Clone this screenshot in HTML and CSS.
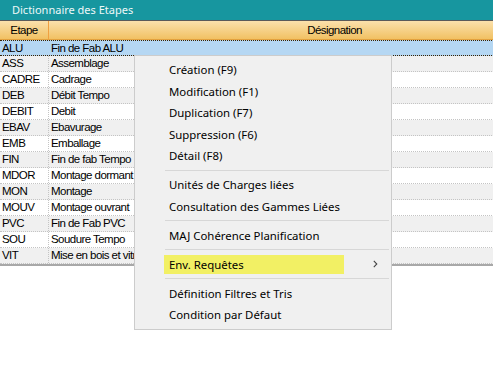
FILE: index.html
```html
<!DOCTYPE html>
<html lang="fr">
<head>
    <meta charset="UTF-8">
    <title>Dictionnaire des Etapes</title>
    <link rel="stylesheet" href="styles.css">
</head>
<body>
    <div class="window">
        <div class="title-bar">Dictionnaire des Etapes</div>
        <div class="grid">
            <div class="row header">
                <div class="cell code">Etape</div>
                <div class="cell label">Désignation</div>
            </div>
            <div class="row selected"><div class="cell code">ALU</div><div class="cell label">Fin de Fab ALU</div></div>
            <div class="row odd"><div class="cell code">ASS</div><div class="cell label">Assemblage</div></div>
            <div class="row"><div class="cell code">CADRE</div><div class="cell label">Cadrage</div></div>
            <div class="row odd"><div class="cell code">DEB</div><div class="cell label">Débit Tempo</div></div>
            <div class="row"><div class="cell code">DEBIT</div><div class="cell label">Debit</div></div>
            <div class="row odd"><div class="cell code">EBAV</div><div class="cell label">Ebavurage</div></div>
            <div class="row"><div class="cell code">EMB</div><div class="cell label">Emballage</div></div>
            <div class="row odd"><div class="cell code">FIN</div><div class="cell label">Fin de fab Tempo</div></div>
            <div class="row"><div class="cell code">MDOR</div><div class="cell label">Montage dormant</div></div>
            <div class="row odd"><div class="cell code">MON</div><div class="cell label">Montage</div></div>
            <div class="row"><div class="cell code">MOUV</div><div class="cell label">Montage ouvrant</div></div>
            <div class="row odd"><div class="cell code">PVC</div><div class="cell label">Fin de Fab PVC</div></div>
            <div class="row"><div class="cell code">SOU</div><div class="cell label">Soudure Tempo</div></div>
            <div class="row odd"><div class="cell code">VIT</div><div class="cell label">Mise en bois et vitrage</div></div>
        </div>

        <div class="context-menu">
            <div class="item">Création (F9)</div>
            <div class="item">Modification (F1)</div>
            <div class="item">Duplication (F7)</div>
            <div class="item">Suppression (F6)</div>
            <div class="item">Détail (F8)</div>
            <div class="separator"></div>
            <div class="item">Unités de Charges liées</div>
            <div class="item">Consultation des Gammes Liées</div>
            <div class="separator"></div>
            <div class="item">MAJ Cohérence Planification</div>
            <div class="separator"></div>
            <div class="item submenu">
                <span class="highlight">Env. Requêtes</span>
                <svg class="arrow" width="5" height="8" viewBox="0 0 5 8">
                    <path d="M0.8 0.8 L3.8 4 L0.8 7.2" fill="none" stroke="#444" stroke-width="1.1"/>
                </svg>
            </div>
            <div class="separator"></div>
            <div class="item">Définition Filtres et Tris</div>
            <div class="item">Condition par Défaut</div>
        </div>
    </div>
</body>
</html>
```

FILE: styles.css
```css
body {
    margin: 0;
    background: #ffffff;
    overflow: hidden;
}
.window {
    position: relative;
    width: 493px;
    height: 368px;
    overflow: hidden;
}
.title-bar {
    height: 20px;
    background: #17969f;
    border-bottom: 1px solid #5a5a5a;
    color: #eef8f8;
    font-family: "Noto Sans", "Segoe UI", sans-serif;
    font-size: 11px;
    line-height: 20px;
    padding-left: 12px;
}
.grid {
    width: 620px;
    font-family: "Liberation Sans", Arial, sans-serif;
    font-size: 11.5px;
    letter-spacing: -0.55px;
    color: #000;
    border-bottom: 2px solid #a8a8a8;
}
.row {
    display: flex;
    height: 16px;
    box-sizing: border-box;
    border-bottom: 1px dotted #c4c4c4;
    background: #ffffff;
}
.row.odd {
    background: #f0f0f0;
}
.cell {
    line-height: 15px;
    padding-left: 2px;
    white-space: nowrap;
    overflow: hidden;
}
.code {
    width: 46px;
    border-right: 1px dotted #c4c4c4;
}
.label {
    flex: 1;
}
.header {
    height: 19px;
    background: linear-gradient(#fbe1ac, #f1c163);
    border-bottom: 1px solid #e3a23e;
}
.header .cell {
    line-height: 18px;
    text-align: center;
    padding-left: 0;
}
.header .code {
    width: 48px;
    border-right: 1px solid #f0a040;
}
.row.selected {
    background: #b5d7f3;
    border-top: 1px dotted #3a2200;
    border-bottom: 1px dotted #3a2200;
}
.row.selected .cell {
    line-height: 14px;
}
.row.selected .code {
    border-right: none;
    width: 47px;
}

/* menu contextuel */
.context-menu {
    position: absolute;
    left: 134px;
    top: 55px;
    width: 256px;
    background: #f0f0f0;
    border: 1px solid #cccccc;
    padding: 3px 0;
    font-family: "Noto Sans", "Segoe UI", sans-serif;
    font-size: 11.4px;
    color: #000;
}
.item {
    height: 21.5px;
    line-height: 21.5px;
    padding-left: 34px;
    white-space: nowrap;
}
.separator {
    height: 1px;
    background: #d7d7d7;
    margin: 3px 2px 3.5px 30px;
}
.item.submenu {
    display: flex;
    align-items: center;
    padding-left: 29px;
}
.highlight {
    width: 175px;
    height: 19px;
    line-height: 19px;
    padding-left: 5px;
    background: #f2f064;
}
.arrow {
    margin-left: auto;
    margin-right: 13px;
}
```
